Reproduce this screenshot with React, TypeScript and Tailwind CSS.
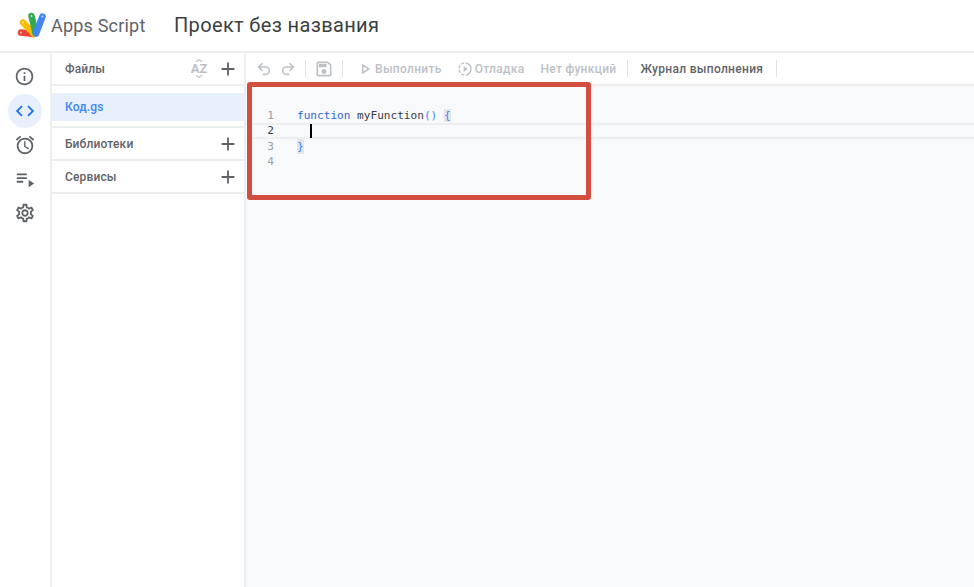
import React from "react";
import { Undo2, Redo2 } from "lucide-react";
import {
  MdInfoOutline,
  MdCode,
  MdAlarm,
  MdPlaylistPlay,
  MdOutlineSettings,
  MdAdd,
  MdOutlineSave,
  MdOutlinePlayArrow,
  MdSlowMotionVideo,
} from "react-icons/md";

const Logo = () => (
  <svg width="30" height="26" viewBox="0 0 30 26" className="shrink-0">
    <path d="M4 20.5 L17 22" stroke="#ea4335" strokeWidth="6.5" strokeLinecap="round" />
    <path d="M6 10.5 L17 22" stroke="#fbbc04" strokeWidth="6.5" strokeLinecap="round" />
    <path d="M14.5 4 L18.5 21" stroke="#34a853" strokeWidth="6.5" strokeLinecap="round" />
    <path d="M25.5 4.5 L19 21.5" stroke="#4285f4" strokeWidth="6.5" strokeLinecap="round" />
    <circle cx="4" cy="20.5" r="1" fill="#fff" opacity="0.7" />
    <circle cx="6" cy="10.5" r="1" fill="#fff" opacity="0.7" />
    <circle cx="14.5" cy="4" r="1" fill="#fff" opacity="0.7" />
    <circle cx="25.5" cy="4.5" r="1" fill="#fff" opacity="0.7" />
  </svg>
);

const SortAz = () => (
  <div className="flex flex-col items-center text-[#bdc1c6] w-[18px] h-[20px] mr-[9px]">
    <svg width="8" height="3" viewBox="0 0 8 3"><path d="M1 3 L4 0.5 L7 3" fill="none" stroke="currentColor" strokeWidth="1.2" /></svg>
    <span className="text-[13px] font-bold leading-[13px]">AZ</span>
    <svg width="8" height="3" viewBox="0 0 8 3"><path d="M1 0 L4 2.5 L7 0" fill="none" stroke="currentColor" strokeWidth="1.2" /></svg>
  </div>
);

const Divider = () => <div className="w-px h-[17px] bg-[#e0e2e5]" />;

const SectionRow = ({ title }: { title: string }) => (
  <div className="h-[33px] flex items-center justify-between pl-[13px] pr-[5px] border-b-2 border-[#eceef0]">
    <span className="text-[12px] font-medium tracking-[0.15px] text-[#5f6368]">{title}</span>
    <MdAdd size={22} className="text-[#5f6368]" />
  </div>
);

const App: React.FC = () => {
  return (
    <div className="w-[974px] h-[587px] overflow-hidden bg-white relative flex flex-col font-['Roboto',sans-serif]">
      <header className="h-[53px] shrink-0 flex items-center border-b-2 border-[#eceef0] pl-[17px] pb-[1px]">
        <Logo />
        <span className="ml-[4px] text-[18px] tracking-[0.2px] text-[#5f6368] w-[123px]">Apps Script</span>
        <span className="text-[20px] text-[#3c4043] tracking-[0.35px]">Проект без названия</span>
      </header>

      <div className="flex-1 flex min-h-0">
        {/* left rail */}
        <nav className="w-[52px] shrink-0 border-r-2 border-[#eceef0] flex flex-col items-center pr-[1px] pt-[6px] text-[#5f6368]">
          <div className="h-[34px] w-[34px] flex items-center justify-center"><MdInfoOutline size={21} /></div>
          <div className="h-[34px] w-[34px] mt-[1px] flex items-center justify-center rounded-full bg-[#e8f0fe] text-[#1a73e8]"><MdCode size={22} /></div>
          <div className="h-[34px] w-[34px] flex items-center justify-center"><MdAlarm size={22} /></div>
          <div className="h-[34px] w-[34px] flex items-center justify-center"><MdPlaylistPlay size={22} /></div>
          <div className="h-[34px] w-[34px] flex items-center justify-center"><MdOutlineSettings size={22} /></div>
        </nav>

        {/* files panel */}
        <aside className="w-[194px] shrink-0 border-r-2 border-[#eceef0] flex flex-col">
          <div className="h-[33px] flex items-center pl-[13px] pr-[5px] border-b-2 border-[#eceef0]">
            <span className="flex-1 text-[12px] font-medium tracking-[0.15px] text-[#5f6368]">Файлы</span>
            <SortAz />
            <MdAdd size={22} className="text-[#5f6368]" />
          </div>
          <div className="pt-[7px] pb-[5px] border-b-2 border-[#eceef0]">
            <div className="h-[28px] bg-[#e8f0fe] flex items-center pl-[13px] text-[12px] tracking-[0.15px] text-[#4285f4] font-medium">Код.gs</div>
          </div>
          <SectionRow title="Библиотеки" />
          <SectionRow title="Сервисы" />
        </aside>

        {/* editor */}
        <main className="flex-1 min-w-0 flex flex-col bg-[#f8f9fa]">
          <div className="h-[33px] shrink-0 bg-white border-b-2 border-[#eceef0] flex items-center pl-[10px] text-[12px] tracking-[0.3px] font-medium text-[#bdc1c6]">
            <Undo2 size={16} strokeWidth={2.4} />
            <Redo2 size={16} strokeWidth={2.4} className="ml-[8px]" />
            <div className="ml-[9px]"><Divider /></div>
            <MdOutlineSave size={20} className="ml-[8px]" />
            <div className="ml-[8px]"><Divider /></div>
            <MdOutlinePlayArrow size={18} className="ml-[13px]" />
            <span className="ml-[1px]">Выполнить</span>
            <MdSlowMotionVideo size={16} className="ml-[15px]" />
            <span className="ml-[2px]">Отладка</span>
            <span className="ml-[16px]">Нет функций</span>
            <div className="ml-[10px]"><Divider /></div>
            <span className="ml-[13px] text-[#5f6368]">Журнал выполнения</span>
            <div className="ml-[13px]"><Divider /></div>
          </div>

          <div className="pt-[22px] font-['DejaVu_Sans_Mono',monospace] text-[11.1px] leading-[15.4px] text-[#3c4043]">
            <div className="flex h-[15.4px]">
              <span className="w-[28px] text-right text-[#9aa0a6]">1</span>
              <span className="ml-[23px]">
                <span className="text-[#3367d6]">function</span> myFunction<span className="text-[#4285f4]">()</span>{" "}
                <span className="bg-[#e3e6e8] text-[#4285f4]">{"{"}</span>
              </span>
            </div>
            <div className="flex h-[15.4px] relative border-y-2 border-[#eceef0] box-border">
              <span className="w-[28px] text-right text-[#3c4043] leading-[11.4px]">2</span>
              <span className="ml-[36px] mt-[-1px] w-[2px] h-[14px] bg-black" />
            </div>
            <div className="flex h-[15.4px]">
              <span className="w-[28px] text-right text-[#9aa0a6]">3</span>
              <span className="ml-[23px] bg-[#e3e6e8] text-[#4285f4]">{"}"}</span>
            </div>
            <div className="flex h-[15.4px]">
              <span className="w-[28px] text-right text-[#9aa0a6]">4</span>
            </div>
          </div>
        </main>
      </div>

      {/* red highlight drawn over the screenshot */}
      <div className="absolute left-[247px] top-[82px] w-[344px] h-[118px] border-[5px] border-[#d24f40] rounded-[3px]" />
    </div>
  );
};

export default App;
